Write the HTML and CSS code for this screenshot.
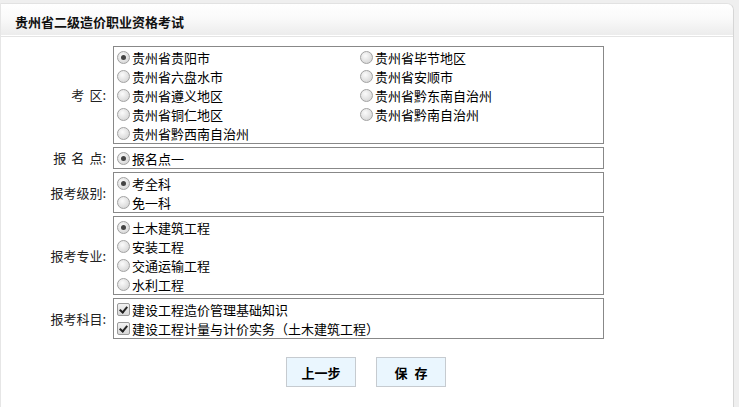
FILE: index.html
```html
<!DOCTYPE html>
<html lang="zh-CN">
<head>
<meta charset="utf-8">
<title>贵州省二级造价职业资格考试</title>
<link rel="stylesheet" href="styles.css">
</head>
<body>
<div class="panel">
  <div class="header"><h1 class="title">贵州省二级造价职业资格考试</h1></div>
  <div class="content">
    <div class="form">
      <div class="label">考<span class="sp"></span>区:</div>
      <div class="box cols2">
        <label class="opt"><input type="radio" name="kq" checked>贵州省贵阳市</label>
        <label class="opt"><input type="radio" name="kq">贵州省毕节地区</label>
        <label class="opt"><input type="radio" name="kq">贵州省六盘水市</label>
        <label class="opt"><input type="radio" name="kq">贵州省安顺市</label>
        <label class="opt"><input type="radio" name="kq">贵州省遵义地区</label>
        <label class="opt"><input type="radio" name="kq">贵州省黔东南自治州</label>
        <label class="opt"><input type="radio" name="kq">贵州省铜仁地区</label>
        <label class="opt"><input type="radio" name="kq">贵州省黔南自治州</label>
        <label class="opt"><input type="radio" name="kq">贵州省黔西南自治州</label>
      </div>

      <div class="label">报<span class="sp"></span>名<span class="sp"></span>点:</div>
      <div class="box">
        <label class="opt"><input type="radio" name="bmd" checked>报名点一</label>
      </div>

      <div class="label">报考级别:</div>
      <div class="box">
        <label class="opt"><input type="radio" name="jb" checked>考全科</label>
        <label class="opt"><input type="radio" name="jb">免一科</label>
      </div>

      <div class="label">报考专业:</div>
      <div class="box">
        <label class="opt"><input type="radio" name="zy" checked>土木建筑工程</label>
        <label class="opt"><input type="radio" name="zy">安装工程</label>
        <label class="opt"><input type="radio" name="zy">交通运输工程</label>
        <label class="opt"><input type="radio" name="zy">水利工程</label>
      </div>

      <div class="label">报考科目:</div>
      <div class="box">
        <label class="opt"><input type="checkbox" checked>建设工程造价管理基础知识</label>
        <label class="opt"><input type="checkbox" checked>建设工程计量与计价实务（土木建筑工程）</label>
      </div>
    </div>
    <div class="actions">
      <button class="btn" type="button">上一步</button>
      <button class="btn" type="button">保<span class="bsp"></span>存</button>
    </div>
  </div>
</div>
</body>
</html>
```

FILE: styles.css
```css
html, body {
  margin: 0;
  padding: 0;
}
body {
  background: #efefef;
  font-family: "Noto Sans CJK SC", "Microsoft YaHei", sans-serif;
  font-size: 13px;
  color: #000;
  width: 739px;
  height: 407px;
  overflow: hidden;
}
.panel {
  margin-top: 3px;
  height: 404px;
  background: #fff;
  border-top: 1px solid #e2e2e2;
  border-right: 1px solid #d6d6d6;
  border-left: 1px solid #e6e6e6;
  border-top-right-radius: 7px;
  box-sizing: border-box;
  width: 734px;
}
.header {
  height: 31px;
  background: linear-gradient(#ffffff 0%, #fafafa 45%, #ececec 100%);
  border-bottom: 1px solid #ffffff;
  box-shadow: 0 1px 0 #e4e4e4;
  border-top-right-radius: 7px;
  display: flex;
  align-items: center;
  padding-left: 14px;
}
.title {
  margin: 0;
  font-size: 13px;
  font-weight: bold;
  line-height: 16px;
  padding-top: 4px;
  color: #111;
}
.content {
  padding-top: 10px;
}
.form {
  display: grid;
  grid-template-columns: 112px 491px;
  row-gap: 3px;
}
.label {
  display: flex;
  align-items: center;
  justify-content: flex-end;
  padding-right: 7px;
  color: #222;
  line-height: 16px;
  white-space: nowrap;
}
.sp {
  display: inline-block;
  width: 5px;
}
.box {
  border: 1px solid #888;
  padding: 1px 0 0 1px;
  display: flex;
  flex-direction: column;
}
.box.cols2 {
  display: grid;
  grid-template-columns: 243px 243px;
}
.opt {
  height: 19px;
  display: flex;
  align-items: center;
  line-height: 19px;
  white-space: nowrap;
}
.opt input {
  -webkit-appearance: none;
  appearance: none;
  width: 13px;
  height: 13px;
  margin: 0 2px 0 2px;
  box-sizing: border-box;
  flex: none;
  position: relative;
}
.opt input[type="radio"] {
  border-radius: 50%;
  border: 1px solid #a2a2a2;
  background: radial-gradient(circle at 40% 35%, #fbfbfb 0%, #e2e2e2 55%, #cdcdcd 100%);
}
.opt input[type="radio"]:checked::after {
  content: "";
  position: absolute;
  left: 3px;
  top: 3px;
  width: 5px;
  height: 5px;
  border-radius: 50%;
  background: #444;
}
.opt input[type="checkbox"] {
  border: 1px solid #9a9a9a;
  border-radius: 2px;
  background: linear-gradient(#f2f2f2, #d8d8d8);
}
.opt input[type="checkbox"]:checked::after {
  content: "";
  position: absolute;
  left: 3px;
  top: 1px;
  width: 3px;
  height: 6px;
  border-right: 2px solid #222;
  border-bottom: 2px solid #222;
  transform: rotate(40deg);
}
.actions {
  display: flex;
  justify-content: center;
  gap: 20px;
  margin-top: 18px;
  padding-right: 2px;
}
.btn {
  width: 70px;
  height: 30px;
  border: 1px solid #c6cbd0;
  background: #eaf6fe;
  font-family: "Noto Sans CJK SC", sans-serif;
  font-size: 13px;
  font-weight: bold;
  color: #000;
  padding: 0;
  margin: 0;
}
.bsp {
  display: inline-block;
  width: 7px;
}
```
